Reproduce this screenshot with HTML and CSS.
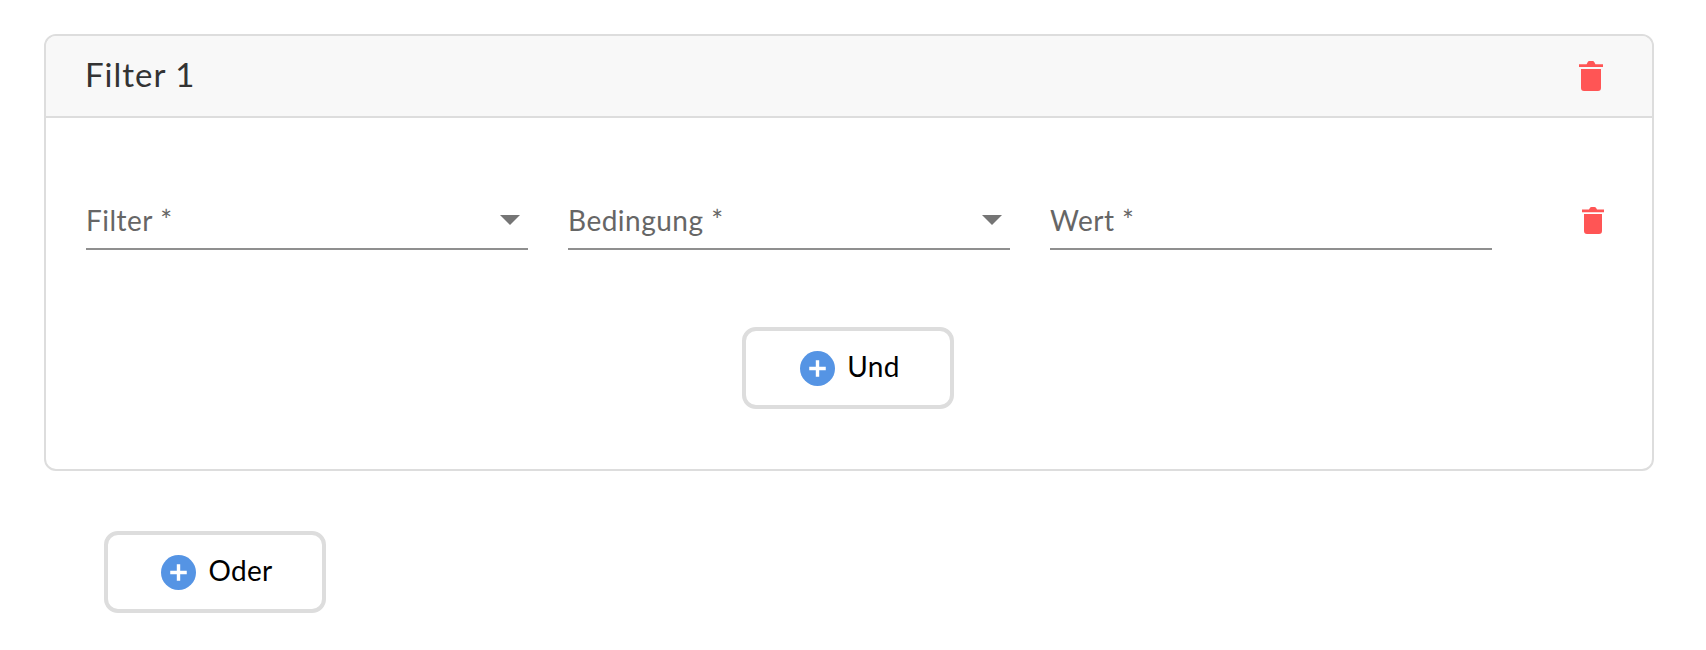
FILE: index.html
```html
<!DOCTYPE html>
<html lang="de">
<head>
    <meta charset="UTF-8">
    <meta name="viewport" content="width=device-width, initial-scale=1.0">
    <title>Filter</title>
    <link rel="stylesheet" href="styles.css">
</head>
<body>
    <div class="card">
        <div class="card-header">
            <span class="card-title">Filter 1</span>
            <svg class="trash trash-large" viewBox="0 0 24 31"><path d="M0 4.200h7.600L8.600 2.200Q9.200 1 10.400 1h3.200q1.200 0 1.800 1.200l1 2H24V7H0zM2 9h20v19q0 3-3 3H5q-3 0-3-3z"/></svg>
        </div>
        <div class="card-body">
            <div class="field-row">
                <div class="field">
                    <span class="field-label">Filter *</span>
                    <span class="arrow"></span>
                </div>
                <div class="field">
                    <span class="field-label">Bedingung *</span>
                    <span class="arrow"></span>
                </div>
                <div class="field">
                    <span class="field-label">Wert *</span>
                </div>
                <svg class="trash trash-small" viewBox="0 0 22 28"><path d="M0 3.600h7L8 1.800Q8.500 1 9.600 1h2.800q1.100 0 1.600.8l1 1.800h7V6.200H0zM2 8h18v17q0 3-3 3H5q-3 0-3-3z"/></svg>
            </div>
            <div class="and-row">
                <button class="add-btn and-btn">
                    <svg class="plus" viewBox="0 0 36 36"><circle cx="18" cy="18" r="18"/><path d="M18 9.500v17M9.500 18h17"/></svg>
                    <span class="btn-text">Und</span>
                </button>
            </div>
        </div>
    </div>
    <button class="add-btn or-btn">
        <svg class="plus" viewBox="0 0 36 36"><circle cx="18" cy="18" r="18"/><path d="M18 9.500v17M9.500 18h17"/></svg>
        <span class="btn-text">Oder</span>
    </button>
</body>
</html>
```

FILE: styles.css
```css
body {
    margin: 0;
    padding: 34px 52px 0 44px;
    font-family: 'Lato', 'Noto Sans', sans-serif;
    background: #fff;
}
.card {
    border: 2px solid #ddd;
    border-radius: 12px;
    overflow: hidden;
}
.card-header {
    display: flex;
    align-items: center;
    justify-content: space-between;
    height: 76px;
    padding: 0 49px 4px 39px;
    background: #f8f8f8;
    border-bottom: 2px solid #ddd;
}
.card-title {
    font-size: 33px;
    color: #333;
    letter-spacing: 1px;
}
.trash { fill: #ff5555; }
.trash-large { width: 24px; height: 31px; margin-top: 2px; }
.trash-small { width: 22px; height: 28px; margin-left: 50px; margin-top: 8px; }
.card-body {
    padding: 64px 48px 60px 40px;
}
.field-row {
    display: flex;
    align-items: center;
    gap: 40px;
}
.field {
    width: 442px;
    height: 68px;
    box-sizing: border-box;
    display: flex;
    align-items: center;
    justify-content: space-between;
    padding: 10px 8px 0 0;
    border-bottom: 2px solid #8f8f8f;
}
.field-label {
    font-size: 28px;
    letter-spacing: 0.5px;
    color: #666;
}
.arrow {
    width: 0;
    height: 0;
    border-left: 10px solid transparent;
    border-right: 10px solid transparent;
    border-top: 10px solid #757575;
}
.and-row {
    display: flex;
    justify-content: center;
    margin: 77px 0 0 6px;
}
.add-btn {
    display: flex;
    align-items: center;
    justify-content: center;
    gap: 12px;
    height: 82px;
    padding: 0 0 0 4px;
    background: #fff;
    border: 4px solid #ddd;
    border-radius: 14px;
    font-family: inherit;
    font-size: 28px;
    letter-spacing: 0.3px;
    color: #000;
}
.btn-text { margin-bottom: 4px; }
.and-btn { width: 212px; }
.or-btn { width: 222px; margin: 60px 0 0 60px; }
.plus { width: 35px; height: 35px; }
.plus circle { fill: #5594e4; }
.plus path { stroke: #fff; stroke-width: 3.500; fill: none; }
```
